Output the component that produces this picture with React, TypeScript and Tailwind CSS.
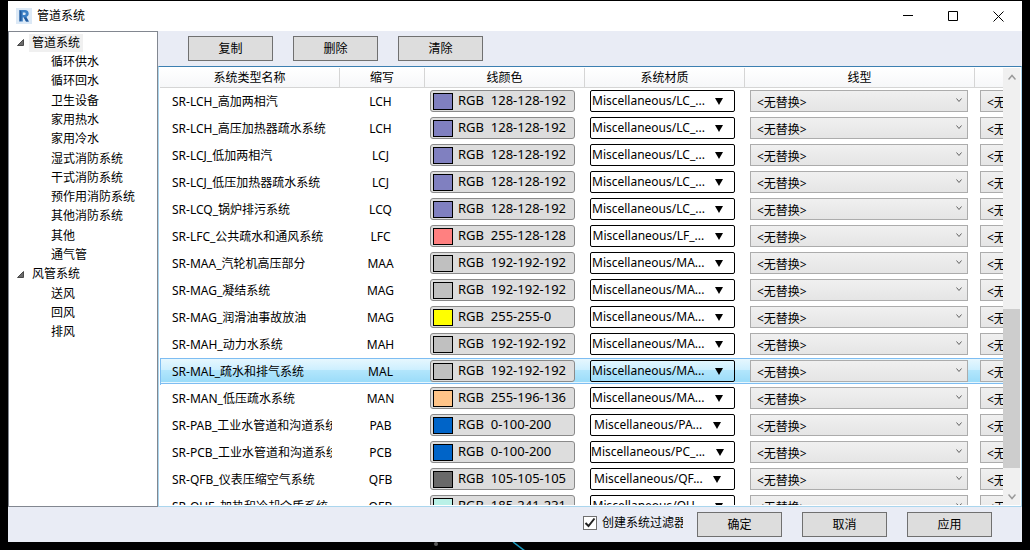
import React from 'react';

interface TreeItem {
  label: string;
  root?: boolean;
  active?: boolean;
}

interface SystemRow {
  name: string;
  abbr: string;
  rgb: number[];
  material: string;
  selected?: boolean;
}

const tree: TreeItem[] = [
  { label: '管道系统', root: true, active: true },
  { label: '循环供水' },
  { label: '循环回水' },
  { label: '卫生设备' },
  { label: '家用热水' },
  { label: '家用冷水' },
  { label: '湿式消防系统' },
  { label: '干式消防系统' },
  { label: '预作用消防系统' },
  { label: '其他消防系统' },
  { label: '其他' },
  { label: '通气管' },
  { label: '风管系统', root: true },
  { label: '送风' },
  { label: '回风' },
  { label: '排风' },
];

const rows: SystemRow[] = [
  { name: 'SR-LCH_高加两相汽', abbr: 'LCH', rgb: [128, 128, 192], material: 'LC_' },
  { name: 'SR-LCH_高压加热器疏水系统', abbr: 'LCH', rgb: [128, 128, 192], material: 'LC_' },
  { name: 'SR-LCJ_低加两相汽', abbr: 'LCJ', rgb: [128, 128, 192], material: 'LC_' },
  { name: 'SR-LCJ_低压加热器疏水系统', abbr: 'LCJ', rgb: [128, 128, 192], material: 'LC_' },
  { name: 'SR-LCQ_锅炉排污系统', abbr: 'LCQ', rgb: [128, 128, 192], material: 'LC_' },
  { name: 'SR-LFC_公共疏水和通风系统', abbr: 'LFC', rgb: [255, 128, 128], material: 'LF_' },
  { name: 'SR-MAA_汽轮机高压部分', abbr: 'MAA', rgb: [192, 192, 192], material: 'MA' },
  { name: 'SR-MAG_凝结系统', abbr: 'MAG', rgb: [192, 192, 192], material: 'MA' },
  { name: 'SR-MAG_润滑油事故放油', abbr: 'MAG', rgb: [255, 255, 0], material: 'MA' },
  { name: 'SR-MAH_动力水系统', abbr: 'MAH', rgb: [192, 192, 192], material: 'MA' },
  { name: 'SR-MAL_疏水和排气系统', abbr: 'MAL', rgb: [192, 192, 192], material: 'MA', selected: true },
  { name: 'SR-MAN_低压疏水系统', abbr: 'MAN', rgb: [255, 196, 136], material: 'MA' },
  { name: 'SR-PAB_工业水管道和沟道系统', abbr: 'PAB', rgb: [0, 100, 200], material: 'PA' },
  { name: 'SR-PCB_工业水管道和沟道系统', abbr: 'PCB', rgb: [0, 100, 200], material: 'PC_' },
  { name: 'SR-QFB_仪表压缩空气系统', abbr: 'QFB', rgb: [105, 105, 105], material: 'QF' },
  { name: 'SR-QUE_加热和冷却介质系统', abbr: 'QEB', rgb: [185, 241, 231], material: 'QU' },
];

const headers = ['系统类型名称', '缩写', '线颜色', '系统材质', '线型', ''];

export default function App() {
  return (
    <div className="flex h-screen flex-col bg-black px-2 pt-px font-['Noto_Sans','Noto_Sans_CJK_SC',sans-serif] text-xs text-black">
      <div className="flex min-h-0 flex-1 flex-col bg-[#e9ecf5]">
        <TitleBar />
        <div className="flex min-h-0 flex-1">
          <Sidebar />
          <main className="flex min-w-0 flex-1 flex-col">
            <div className="flex gap-5 px-[30px] py-[5px]">
              <DialogButton label="复制" />
              <DialogButton label="删除" />
              <DialogButton label="清除" />
            </div>
            <SystemList />
          </main>
        </div>
        <footer className="flex h-[35px] shrink-0 items-center justify-end pr-[30px]">
          <label className="mr-[14px] flex w-[100px] items-center gap-[5px] overflow-hidden pb-1 whitespace-nowrap">
            <input type="checkbox" defaultChecked className="peer sr-only" />
            <span className="flex size-[14px] shrink-0 items-center justify-center border border-[#707070] bg-white">
              <svg width="12" height="12" viewBox="0 0 12 12" fill="none" stroke="#222" strokeWidth="2">
                <path d="M1.500 6l3 3 6-7.500" />
              </svg>
            </span>
            <span>创建系统过滤器</span>
          </label>
          <div className="flex gap-5">
            <DialogButton label="确定" />
            <DialogButton label="取消" />
            <DialogButton label="应用" />
          </div>
        </footer>
      </div>
      <Backdrop />
    </div>
  );
}

function TitleBar() {
  return (
    <header className="flex h-[30px] shrink-0 items-center bg-white pl-2">
      <svg width="16" height="16" viewBox="0 0 16 16" className="mr-[5px]">
        <rect width="16" height="16" fill="#dce9f6" />
        <path d="M3.500 2h5.500a3.600 3.600 0 0 1 1.500 6.900L12.800 13.500H10L7.800 9.400H6.800V13.500H3.500z" fill="#3b7fc4" />
        <path d="M3.500 2l2 1.500v9l-2 1z" fill="#235a9c" />
        <path d="M7.800 9.400h2.500l2.500 4.100H10z" fill="#235a9c" />
        <path d="M6.800 4.500h1.700a1.200 1.200 0 0 1 0 2.400H6.800z" fill="#dce9f6" />
      </svg>
      <h1 className="flex-1">管道系统</h1>
      <div className="flex">
        <button aria-label="最小化" className="flex h-[30px] w-[45px] items-center justify-center">
          <svg width="10" height="10" stroke="#000"><path d="M0 4.500h10" /></svg>
        </button>
        <button aria-label="最大化" className="flex h-[30px] w-[45px] items-center justify-center">
          <svg width="10" height="10" fill="none" stroke="#000"><path d="M.5.5h9v9h-9z" /></svg>
        </button>
        <button aria-label="关闭" className="flex h-[30px] w-[47px] items-center justify-center">
          <svg width="11" height="11" stroke="#000"><path d="M.5.5l10 10M10.500.5l-10 10" /></svg>
        </button>
      </div>
    </header>
  );
}

function Sidebar() {
  return (
    <nav className="w-[150px] shrink-0 border border-[#828790] bg-white pt-px">
      <ul className="grid h-[309px] auto-rows-fr">
        {tree.map((item, i) => (
          <li key={i} className={`flex items-center ${item.root ? 'pl-2' : 'pl-[42px]'}`}>
            {item.root && (
              <svg width="7" height="7" className="mr-[5px]">
                <path d="M6.500.5v6h-6z" fill="#6b6b6b" stroke="#4a4a4a" />
              </svg>
            )}
            <span className={`leading-[18px] ${item.root ? 'px-[3px]' : ''} ${item.active ? 'bg-[#f0f0f0]' : ''}`}>
              {item.label}
            </span>
          </li>
        ))}
      </ul>
    </nav>
  );
}

function SystemList() {
  return (
    <div className="flex min-h-0 flex-1 border border-[#abd6ee] border-t-[#3c7fb1] bg-white p-px">
      <div className="min-w-0 flex-1 overflow-hidden">
        <table className="w-full table-fixed border-separate border-spacing-0">
          <colgroup>
            <col className="w-[180px]" />
            <col className="w-[85px]" />
            <col className="w-[160px]" />
            <col className="w-[160px]" />
            <col />
            <col className="w-[28px]" />
          </colgroup>
          <thead>
            <tr>
              {headers.map((h, i) => (
                <th
                  key={i}
                  className="h-5 border-r border-b border-[#d5d5d5] bg-linear-to-b from-white to-[#f6f7f9] p-0 font-normal leading-[18px] last:border-r-0"
                >
                  {h}
                </th>
              ))}
            </tr>
          </thead>
          <tbody>
            {rows.map((row, i) => <Row key={i} row={row} />)}
          </tbody>
        </table>
      </div>
      <ScrollBar />
    </div>
  );
}

function Row({ row }: { row: SystemRow }) {
  const color = row.rgb.join('-');
  return (
    <tr
      className={
        row.selected
          ? '*:bg-[linear-gradient(#7ebdf2_1px,#e6f7fe_1px,#ccefff_12px,#b3e6fc_12px,#9bdcf9_24px,#e6f7fe_24px,#e6f7fe_25px,#7ebdf2_25px)] *:bg-[length:100%_26px] *:bg-no-repeat'
          : ''
      }
    >
      <td className={`h-[27px] border-l py-0 pr-2 pl-[11px] ${row.selected ? 'border-[#7ebdf2]' : 'border-transparent'}`}>
        <div className="overflow-hidden whitespace-nowrap leading-[22px]">{row.name}</div>
      </td>
      <td className="p-0 pr-1 text-center">{row.abbr}</td>
      <td className="p-0 pr-[10px] pb-px pl-[5px]">
        <button className="flex h-[22px] w-full items-center gap-[5px] rounded-[3px] border border-[#8a8a8a] bg-[#ddd] px-[2px] text-[13px] whitespace-pre">
          <span className="h-[17px] w-5 border border-black" style={{ backgroundColor: `rgb(${row.rgb.join(',')})` }} />
          {`RGB  ${color}`}
        </button>
      </td>
      <td className="p-0 pr-[10px] pb-px pl-[5px]">
        <label className="flex h-[22px] items-center justify-center gap-[10px] overflow-hidden rounded-xs border border-black pr-[10px]">
          <select aria-label={`${row.name} 系统材质`} className="appearance-none leading-5">
            <option>{`Miscellaneous/${row.material}...`}</option>
          </select>
          <svg width="8" height="7" className="shrink-0"><path d="M0 0h8L4 7z" /></svg>
        </label>
      </td>
      <td className="p-0 pr-[7px] pb-px pl-[5px]">
        <LineTypeSelect label={`${row.name} 线型`} />
      </td>
      <td className="overflow-hidden p-0 pb-px pl-[5px]">
        <div className="w-[218px]">
          <LineTypeSelect label={`${row.name} 替换`} />
        </div>
      </td>
    </tr>
  );
}

function LineTypeSelect({ label }: { label: string }) {
  return (
    <div className="relative">
      <select
        aria-label={label}
        className="block h-[22px] w-full appearance-none border border-[#acacac] bg-linear-to-b from-[#f0f0f0] to-[#e5e5e5] px-[6px] pt-0.5 leading-5"
      >
        <option>{'<无替换>'}</option>
      </select>
      <svg width="6" height="5" fill="none" stroke="#606060" className="pointer-events-none absolute top-2 right-[6px]">
        <path d="M.5.5L3 3.500 5.500.5" />
      </svg>
    </div>
  );
}

function ScrollBar() {
  return (
    <div className="flex w-[17px] shrink-0 flex-col items-center bg-[#f0f0f0]">
      <button aria-label="向上" className="flex h-[17px] w-full items-center justify-center">
        <svg width="8" height="6" fill="none" stroke="#9a9a9a" strokeWidth="1.500"><path d="M.5 5.500L4 1.500l3.500 4" /></svg>
      </button>
      <div className="w-full grow-[223]" />
      <div className="w-full grow-[159] bg-[#cdcdcd]" />
      <div className="w-full grow-[20]" />
      <button aria-label="向下" className="flex h-[17px] w-full items-center justify-center">
        <svg width="8" height="6" fill="none" stroke="#9a9a9a" strokeWidth="1.500"><path d="M.5.5L4 4.500l3.500-4" /></svg>
      </button>
    </div>
  );
}

function DialogButton({ label }: { label: string }) {
  return <button className="h-[25px] w-[85px] border border-[#707070] bg-[#ddd]">{label}</button>;
}

// sliver of the drawing canvas under the dialog
function Backdrop() {
  return (
    <svg height="8" className="w-full shrink-0">
      <circle cx="428" cy="2" r="2" fill="#5a5a5a" />
      <path d="M505 0l12 9" stroke="#1a9ac0" strokeWidth="1.500" />
    </svg>
  );
}
